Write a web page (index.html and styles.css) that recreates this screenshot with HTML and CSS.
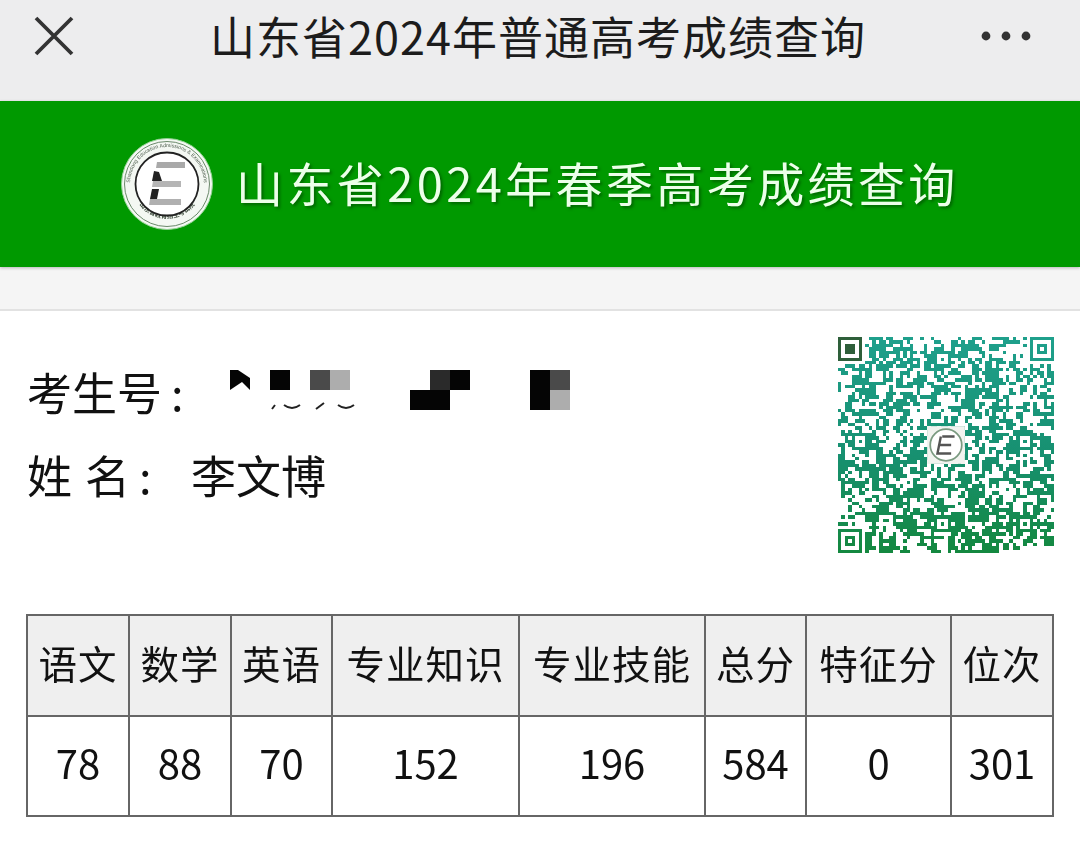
FILE: index.html
```html
<!DOCTYPE html>
<html lang="zh-CN">
<head>
    <meta charset="UTF-8">
    <meta name="viewport" content="width=device-width, initial-scale=1.0">
    <title>山东省2024年普通高考成绩查询</title>
    <link rel="stylesheet" href="styles.css">
</head>
<body>

    <!-- Top bar -->
    <div class="top-bar">
        <svg class="close-icon" viewBox="0 0 40 40" width="40" height="40">
            <path d="M2 2 L38 38 M38 2 L2 38" stroke="#333" stroke-width="3.8" fill="none"/>
        </svg>
        <div class="top-title">山东省2024年普通高考成绩查询</div>
        <svg class="more-icon" viewBox="0 0 50 10" width="50" height="10">
            <circle cx="5" cy="5" r="4.4" fill="#333"/>
            <circle cx="25" cy="5" r="4.4" fill="#333"/>
            <circle cx="45" cy="5" r="4.4" fill="#333"/>
        </svg>
    </div>

    <!-- Green banner -->
    <div class="banner">
        <svg class="logo" viewBox="0 0 92 92" width="92" height="92">
            <defs>
                <path id="arc-top" d="M9 46 A37 37 0 0 1 83 46"/>
                <path id="arc-bottom" d="M13 56 A34.5 34.5 0 0 0 79 56"/>
            </defs>
            <circle cx="46" cy="46" r="45.5" fill="#f4f8f3" stroke="#8fcf8f" stroke-width="1"/>
            <circle cx="46" cy="46" r="42.5" fill="none" stroke="#6b8a6b" stroke-width="1"/>
            <text class="logo-en"><textPath href="#arc-top" startOffset="50%" text-anchor="middle">Shandong Education Admissions &amp; Examinations</textPath></text>
            <text class="logo-cn"><textPath href="#arc-bottom" startOffset="50%" text-anchor="middle">山东省教育招生考试院</textPath></text>
            <circle cx="46" cy="46" r="31.5" fill="#fff" stroke="#222" stroke-width="1.8"/>
            <path d="M36 24 H64 V30 H35 Z" fill="#a9a9a9"/>
            <path d="M32 43 H60 V49 H31 Z" fill="#b5b5b5"/>
            <path d="M29 61 H60 V67 H28 Z" fill="#b0b0b0"/>
            <path d="M33 33 L38 34 L41 43 H31 Z" fill="#222"/>
            <path d="M31 51 H38 L36 61 H29 Z" fill="#222"/>
        </svg>
        <div class="banner-title">山东省2024年春季高考成绩查询</div>
    </div>

    <div class="gap-band"></div>

    <div class="content">
        <div class="info-row">
            <div class="info-text">
                <div class="info-line">
                    <span class="info-label">考生号<span class="colon">:</span></span>
                    <div class="mosaic">
                        <i class="m black notch c1"></i>
                        <i class="m black c3"></i>
                        <i class="m dark c5"></i>
                        <i class="m gray c6"></i>
                        <i class="m dark2 c11"></i>
                        <i class="m black c12"></i>
                        <i class="m black c10b"></i>
                        <i class="m black c16"></i>
                        <i class="m dark c17"></i>
                        <i class="m black c16b"></i>
                        <i class="m gray c17b"></i>
                        <svg class="frags" viewBox="0 0 100 8" width="100" height="8">
                            <path d="M2 7 L5 3 M14 3 Q22 9 30 3 M46 7 L54 1 M68 3 Q76 9 84 3" stroke="#222" stroke-width="2" fill="none"/>
                        </svg>
                    </div>
                </div>
                <div class="info-line name-line">
                    <span class="name-label">姓 名<span class="colon">:</span></span>
                    <span class="name-value">李文博</span>
                </div>
            </div>
            <svg id="qr" class="qr" viewBox="0 0 63 63" width="216" height="216" shape-rendering="crispEdges">
                <defs>
                    <linearGradient id="qr-fill" x1="0" y1="0" x2="0" y2="1">
                        <stop offset="0" stop-color="#1fa08c"/>
                        <stop offset="0.55" stop-color="#179070"/>
                        <stop offset="1" stop-color="#14883f"/>
                    </linearGradient>
                </defs>
                <path id="qr-modules" fill="url(#qr-fill)"/>
                <path d="M0 0h7v7h-7z M1 1v5h5v-5z M2 2h3v3h-3z" fill="#2e5f3a" fill-rule="evenodd"/>
                <g shape-rendering="auto">
                    <rect x="26" y="26" width="11" height="11" fill="#f1f3ef"/>
                    <circle cx="31.5" cy="31.5" r="4.6" fill="#fff" stroke="#7a9a80" stroke-width="0.5"/>
                    <path d="M30.4 29 H34 M30 29 L29 34 H33 M29.6 31.5 H33" stroke="#555" stroke-width="0.7" fill="none"/>
                </g>
            </svg>
        </div>

        <table class="score-table">
            <colgroup>
                <col class="w-a"><col class="w-a"><col class="w-b">
                <col class="w-l"><col class="w-l2">
                <col class="w-b"><col class="w-m"><col class="w-a">
            </colgroup>
            <tr>
                <th>语文</th><th>数学</th><th>英语</th><th>专业知识</th>
                <th>专业技能</th><th>总分</th><th>特征分</th><th>位次</th>
            </tr>
            <tr>
                <td>78</td><td>88</td><td>70</td><td>152</td>
                <td>196</td><td>584</td><td>0</td><td>301</td>
            </tr>
        </table>
    </div>

    <script src="qr.js"></script>
</body>
</html>
```

FILE: styles.css
```css
* {
    box-sizing: border-box;
}

html, body {
    margin: 0;
    padding: 0;
}

body {
    width: 1080px;
    height: 844px;
    overflow: hidden;
    background-color: #fff;
    color: #111;
    font-family: "Noto Sans CJK SC", "Noto Sans", sans-serif;
    filter: blur(0.35px);
}

/* Top bar */
.top-bar {
    height: 101px;
    background-color: #ededee;
    display: flex;
    align-items: flex-start;
    padding: 16px 49px 0 34px;
    justify-content: space-between;
}

.top-title {
    font-size: 45px;
    line-height: 46px;
    letter-spacing: 1px;
    margin-top: -3px;
    margin-left: 21px;
    white-space: nowrap;
    color: #1c1c1c;
}

.more-icon {
    margin-top: 15px;
}

/* Green banner */
.banner {
    height: 166px;
    background-color: #009900;
    display: flex;
    align-items: center;
    padding-left: 121px;
    gap: 23px;
    box-shadow: 0 1px 3px rgba(0, 0, 0, 0.25);
    position: relative;
}

.logo-en {
    font-family: "Liberation Sans", sans-serif;
    font-size: 5.2px;
    fill: #4a5a4a;
}

.logo-cn {
    font-size: 6.4px;
    font-weight: bold;
    fill: #3c4a3c;
}

.banner-title {
    font-size: 47px;
    line-height: 60px;
    letter-spacing: 3.4px;
    margin-top: -4px;
    color: #ecffe9;
    text-shadow: 2px 2px 3px rgba(0, 60, 0, 0.55);
    white-space: nowrap;
}

.gap-band {
    height: 44px;
    background-color: #f5f5f5;
    border-bottom: 2px solid #e2e2e2;
}

/* Candidate info */
.content {
    padding: 26px 26px 0 26px;
}

.info-row {
    display: flex;
    justify-content: space-between;
    align-items: flex-start;
}

.info-text {
    padding-top: 30px;
}

.info-line {
    display: flex;
    align-items: center;
    height: 50px;
    font-size: 45px;
    line-height: 50px;
}

.name-line {
    margin-top: 33px;
}

.colon {
    margin-left: 9px;
}

.info-label {
    width: 204px;
    padding-left: 1px;
    white-space: nowrap;
}

.name-label {
    width: 165px;
    padding-left: 1px;
    word-spacing: 3px;
    white-space: pre;
}

.name-value {
    white-space: nowrap;
}

/* Pixelated candidate number */
.mosaic {
    display: grid;
    grid-template-columns: repeat(17, 20px);
    grid-template-rows: 20px 20px;
    align-self: flex-start;
    margin-top: 3px;
}

.m {
    display: block;
}

.black { background-color: #050505; }
.dark { background-color: #4a4a4a; }
.dark2 { background-color: #2a2a2a; }
.gray { background-color: #adadad; }

.notch {
    clip-path: polygon(0 0, 40% 0, 100% 40%, 100% 100%, 60% 60%, 0 100%);
}

.c1 { grid-area: 1 / 1; }
.c3 { grid-area: 1 / 3; }
.c5 { grid-area: 1 / 5; }
.c6 { grid-area: 1 / 6; }
.c11 { grid-area: 1 / 11; }
.c12 { grid-area: 1 / 12; }
.c10b { grid-area: 2 / 10 / 2 / 12; }
.c16 { grid-area: 1 / 16; }
.c17 { grid-area: 1 / 17; }
.c16b { grid-area: 2 / 16; }
.c17b { grid-area: 2 / 17; }

.frags {
    grid-area: 2 / 3 / 2 / 9;
    align-self: end;
    display: block;
}

.qr {
    display: block;
    filter: blur(0.4px);
}

/* Score table */
.score-table {
    width: 1028px;
    margin-top: 61px;
    border-collapse: collapse;
    table-layout: fixed;
    font-size: 38.5px;
}

.w-a { width: 102px; }
.w-b { width: 101px; }
.w-l { width: 187px; }
.w-l2 { width: 186px; }
.w-m { width: 145px; }

.score-table th, .score-table td {
    height: 100.5px;
    padding: 0;
    border: 2px solid #666;
    text-align: center;
    font-weight: normal;
    white-space: nowrap;
}

.score-table th {
    background-color: #efefef;
    letter-spacing: 1px;
    padding-bottom: 6px;
}

.score-table td {
    font-size: 40px;
    padding-bottom: 8px;
}
```

FILE: qr.js
```js
// Draws the QR modules into #qr-modules
const size = 63;
const grid = [];

// simple seeded random so the picture is the same on each load
let seed = 20240;
function rnd() {
    seed = (seed * 1664525 + 1013904223) % 4294967296;
    return seed / 4294967296;
}

for (let y = 0; y < size; y++) {
    grid.push([]);
    for (let x = 0; x < size; x++) {
        // neighbour bias gives the blocky look of a real code
        const left = x > 0 && grid[y][x - 1];
        const up = y > 0 && grid[y - 1][x];
        let chance = 0.36;
        if (left) chance += 0.16;
        if (up) chance += 0.16;
        grid[y].push(rnd() < chance);
    }
}

function stamp(px, py, n, quiet) {
    for (let y = -quiet; y < n + quiet; y++) {
        for (let x = -quiet; x < n + quiet; x++) {
            const gx = px + x;
            const gy = py + y;
            if (gx < 0 || gy < 0 || gx >= size || gy >= size) continue;
            const ring = Math.min(x, y, n - 1 - x, n - 1 - y);
            const on = ring >= 0 && (ring % 2 === 0);
            grid[gy][gx] = on;
        }
    }
}

// finder patterns
stamp(0, 0, 7, 1);
stamp(56, 0, 7, 1);
stamp(0, 56, 7, 1);

// alignment patterns
[6, 30, 54].forEach(ay => {
    [6, 30, 54].forEach(ax => {
        if ((ax === 6 && ay === 6) || (ax === 54 && ay === 6) || (ax === 6 && ay === 54)) return;
        if (ax === 30 && ay === 30) return;
        stamp(ax - 2, ay - 2, 5, 0);
    });
});

let d = '';
for (let y = 0; y < size; y++) {
    let x = 0;
    while (x < size) {
        if (!grid[y][x]) {
            x++;
            continue;
        }
        let run = 1;
        while (x + run < size && grid[y][x + run]) run++;
        d += `M${x} ${y}h${run}v1h-${run}z`;
        x += run;
    }
}
document.getElementById('qr-modules').setAttribute('d', d);
```
